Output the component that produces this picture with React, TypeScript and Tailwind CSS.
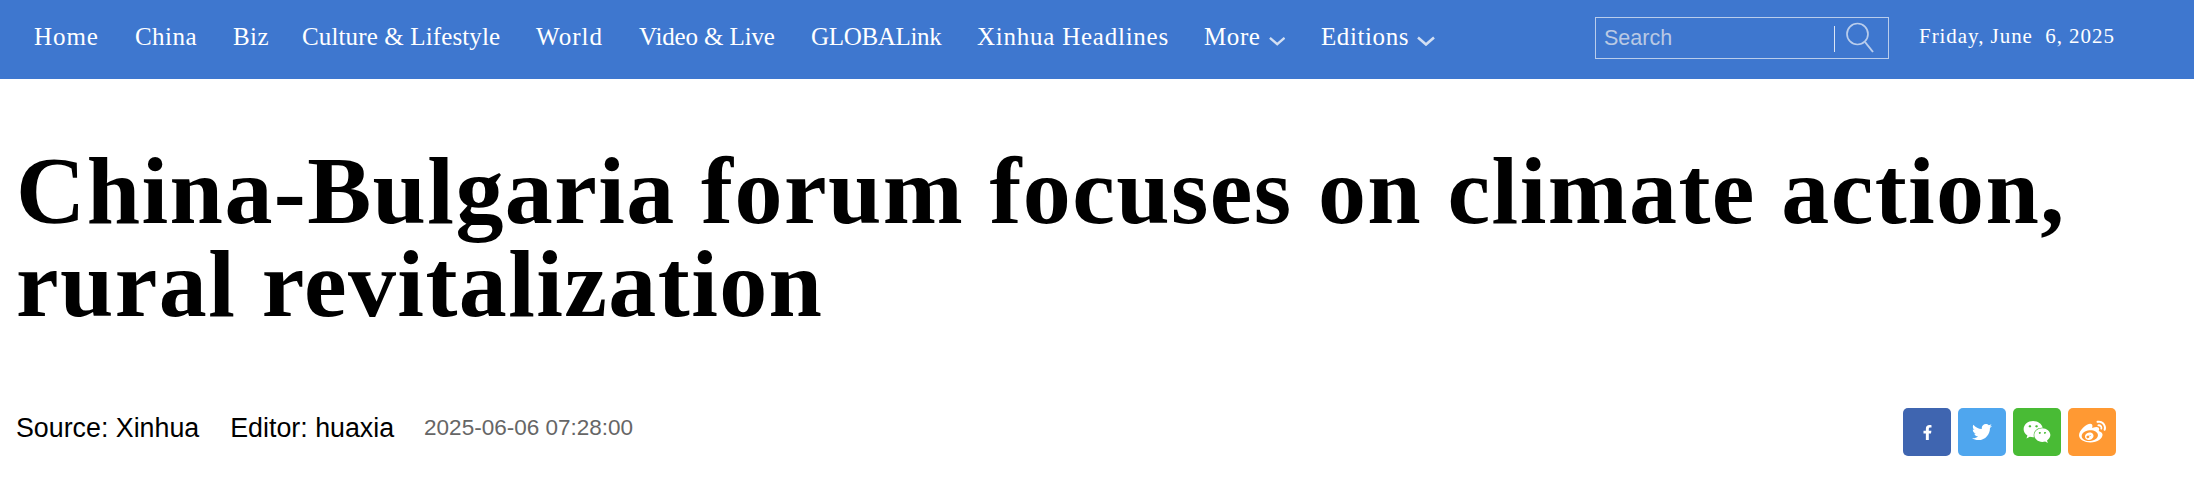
import { FaFacebookF, FaTwitter, FaWeixin, FaWeibo } from "react-icons/fa";

const navItems = [
  { label: "Home", c: "w-[65px] tracking-[0.95px]" },
  { label: "China", c: "w-[62px] tracking-[0.45px]" },
  { label: "Biz", c: "w-[33px] tracking-[0.45px]" },
  { label: "Culture & Lifestyle", c: "w-[198px] tracking-[0.13px]" },
  { label: "World", c: "w-[67px] tracking-[1.05px]" },
  { label: "Video & Live", c: "w-[136px] tracking-[-0.13px]" },
  { label: "GLOBALink", c: "w-[130px] tracking-[-0.33px]" },
  { label: "Xinhua Headlines", c: "w-[191px] tracking-[0.76px]" },
];

function Chevron() {
  return (
    <svg width="18" height="10" viewBox="0 0 18 10" fill="none" className="mt-[9px] ml-2">
      <path d="M1 1.5 L9 8.5 L17 1.5" stroke="#d3dff2" strokeWidth="2.6" />
    </svg>
  );
}

export default function App() {
  return (
    <div className="w-[2194px] h-[477px] overflow-hidden bg-white font-['Liberation_Sans',sans-serif]">
      <header className="h-[79px] bg-[#3e77cf] flex items-center pl-[34px] text-white">
        <nav className="flex items-center gap-[36px] pb-[6px] font-['Liberation_Serif',serif] text-[25px] whitespace-nowrap w-[1561px]">
          {navItems.map((n) => (
            <a key={n.label} className={n.c}>
              {n.label}
            </a>
          ))}
          <a className="flex items-center w-[81px] tracking-[0.6px]">
            More
            <Chevron />
          </a>
          <a className="flex items-center tracking-[0.6px]">
            Editions
            <Chevron />
          </a>
        </nav>
        <div className="w-[294px] h-[42px] mb-[3px] border border-[#b9cdec] flex items-center pl-[8px]">
          <span className="flex-1 text-[21.5px] text-[#b9c9e4]">Search</span>
          <span className="w-px h-[26px] bg-[#dbe5f5] mt-[2px]" />
          <svg width="30" height="34" viewBox="0 0 30 34" fill="none" className="ml-[10px] mr-[13px]">
            <circle cx="12.5" cy="13" r="10.5" stroke="#b9cdec" strokeWidth="1.7" />
            <path d="M20 21 L28 31" stroke="#b9cdec" strokeWidth="2" />
          </svg>
        </div>
        <div className="ml-[30px] pb-[6px] font-['Liberation_Serif',serif] text-[21px] tracking-[0.95px] whitespace-pre">
          Friday, June  6, 2025
        </div>
      </header>

      <h1 className="mt-[65px] ml-[16px] w-[2090px] font-['Liberation_Serif',serif] font-bold text-[96px] leading-[93px] tracking-[1.4px] text-black">
        China-Bulgaria forum focuses on climate action, rural revitalization
      </h1>

      <div className="mt-[78px] pl-[16px] pr-[78px] flex items-center justify-between">
        <div className="flex items-center mb-[8px] text-[26.8px] text-black whitespace-nowrap">
          <span>Source: Xinhua</span>
          <span className="ml-[31px]">Editor: huaxia</span>
          <span className="ml-[30px] text-[22.5px] text-[#666666]">2025-06-06 07:28:00</span>
        </div>
        <div className="flex gap-[7px] text-white">
          <a className="w-[48px] h-[48px] rounded-[5px] bg-[#3f65b0] flex items-center justify-center">
            <FaFacebookF size={15} />
          </a>
          <a className="w-[48px] h-[48px] rounded-[5px] bg-[#4fa6ee] flex items-center justify-center">
            <FaTwitter size={20} />
          </a>
          <a className="w-[48px] h-[48px] rounded-[5px] bg-[#49bb35] flex items-center justify-center">
            <FaWeixin size={28} />
          </a>
          <a className="w-[48px] h-[48px] rounded-[5px] bg-[#ff9933] flex items-center justify-center">
            <FaWeibo size={27} />
          </a>
        </div>
      </div>
    </div>
  );
}
